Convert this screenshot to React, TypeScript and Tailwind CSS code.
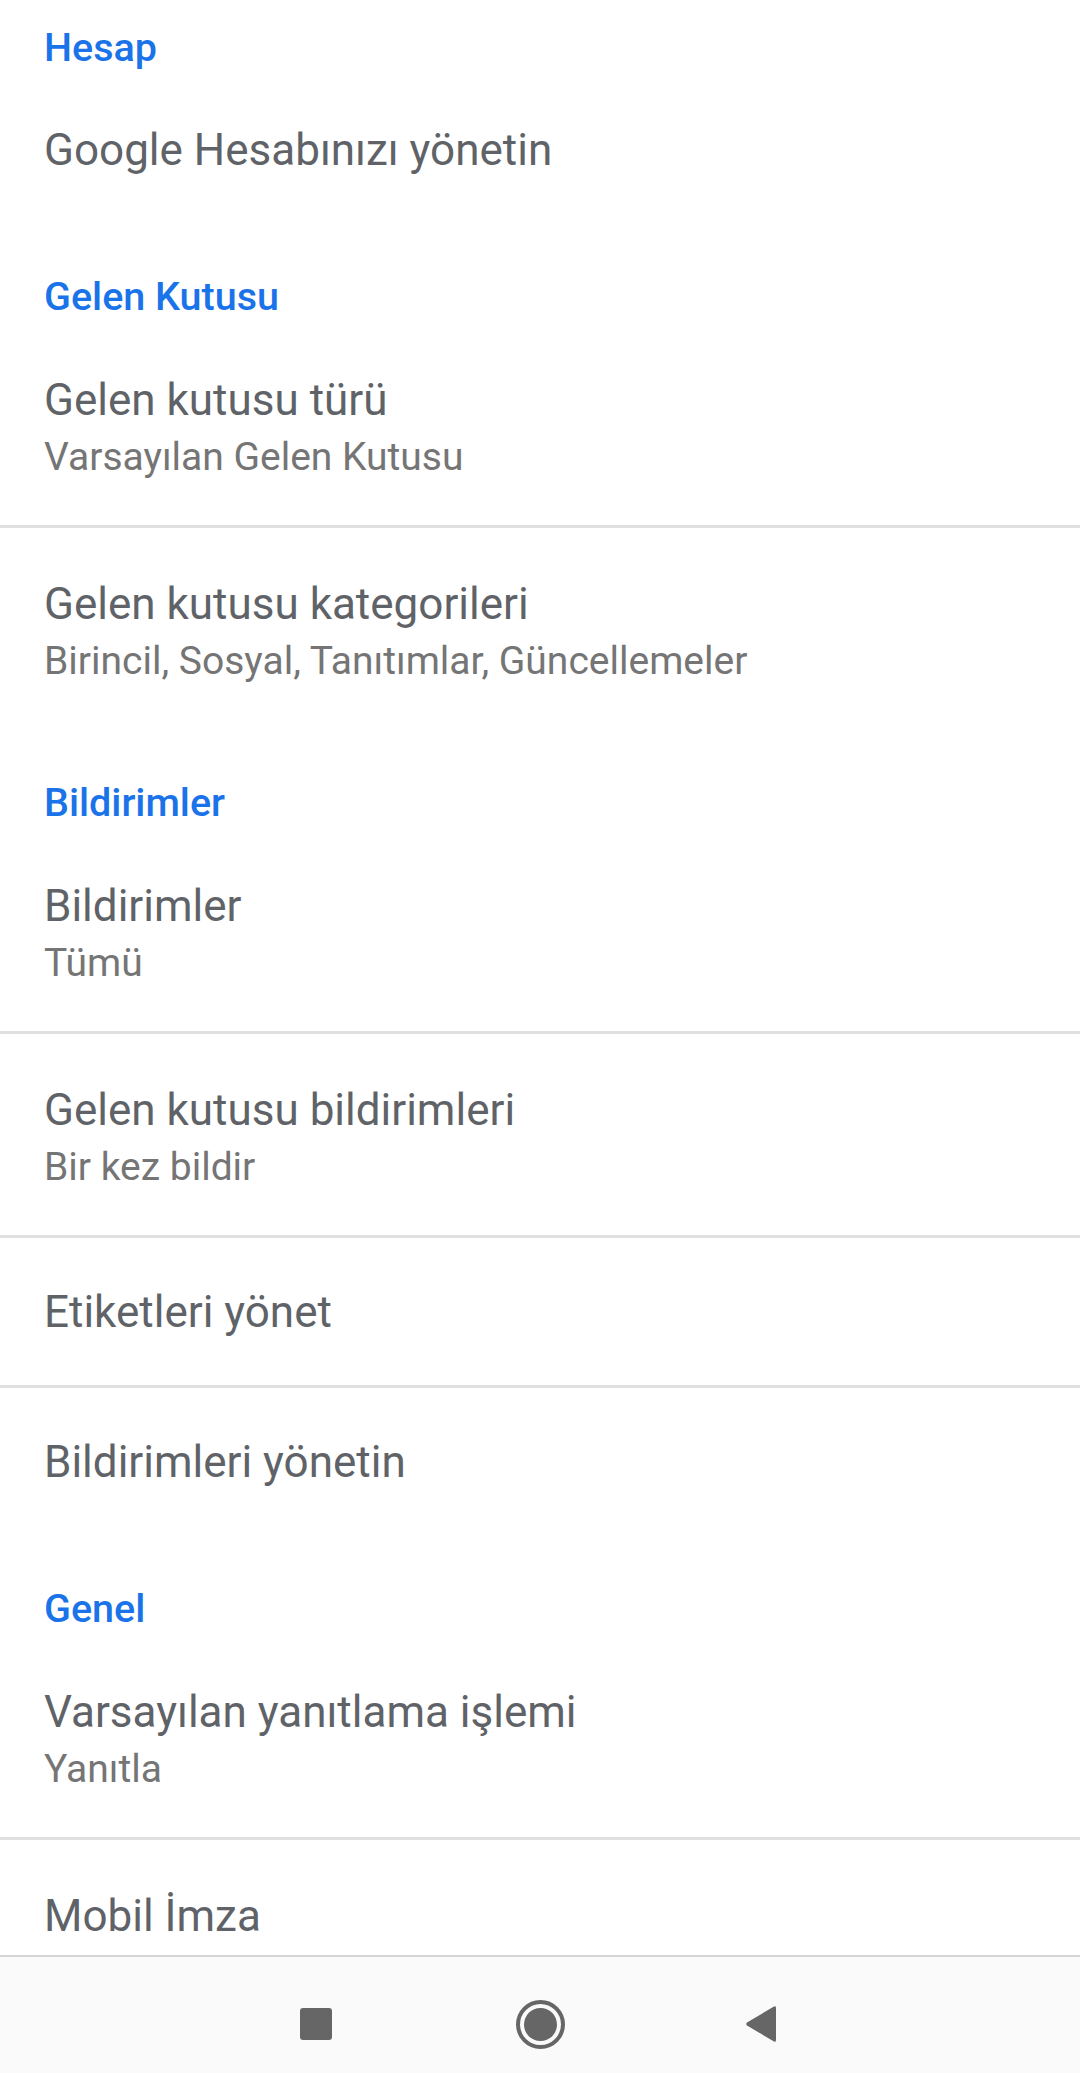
import React from "react";

type Item =
  | { kind: "header"; label: string; first?: boolean }
  | { kind: "row"; title: string; subtitle?: string; tall?: boolean }
  | { kind: "divider" };

const ITEMS: Item[] = [
  { kind: "header", label: "Hesap", first: true },
  { kind: "row", title: "Google Hesabınızı yönetin" },
  { kind: "header", label: "Gelen Kutusu" },
  { kind: "row", title: "Gelen kutusu türü", subtitle: "Varsayılan Gelen Kutusu" },
  { kind: "divider" },
  { kind: "row", title: "Gelen kutusu kategorileri", subtitle: "Birincil, Sosyal, Tanıtımlar, Güncellemeler" },
  { kind: "header", label: "Bildirimler" },
  { kind: "row", title: "Bildirimler", subtitle: "Tümü" },
  { kind: "divider" },
  { kind: "row", title: "Gelen kutusu bildirimleri", subtitle: "Bir kez bildir" },
  { kind: "divider" },
  { kind: "row", title: "Etiketleri yönet" },
  { kind: "divider" },
  { kind: "row", title: "Bildirimleri yönetin" },
  { kind: "header", label: "Genel" },
  { kind: "row", title: "Varsayılan yanıtlama işlemi", subtitle: "Yanıtla" },
  { kind: "divider" },
  // subtitle sits under the nav bar, so only the title is drawn
  { kind: "row", title: "Mobil İmza", tall: true },
];

function Header({ label, first }: { label: string; first?: boolean }) {
  return (
    <div className={first ? "h-[76px] pt-[25px] px-[44px]" : "h-[101px] pt-[51px] px-[44px]"}>
      <p className="text-[39.5px] leading-[46px] font-medium text-[#1a73e8]">{label}</p>
    </div>
  );
}

function Row({ title, subtitle, tall }: { title: string; subtitle?: string; tall?: boolean }) {
  if (!subtitle && !tall) {
    return (
      <div className="h-[147px] px-[44px] flex items-center">
        <p className="text-[44px] leading-[60px] text-[#5f6368]">{title}</p>
      </div>
    );
  }
  return (
    <div className="h-[201px] pt-[46px] px-[44px]">
      <p className="text-[44px] leading-[60px] text-[#5f6368]">{title}</p>
      {subtitle && <p className="text-[39px] leading-[54px] text-[#757575]">{subtitle}</p>}
    </div>
  );
}

function NavBar() {
  return (
    <div className="h-[118px] shrink-0 border-t-2 border-[#d6d6d6] bg-[#fafafa] flex justify-center items-start pt-[43px] gap-[176px]">
      {/* recents */}
      <div className="w-[48px] h-[48px] flex items-center justify-center">
        <div className="w-[32px] h-[32px] rounded-[3px] bg-[#666666]" />
      </div>
      {/* home */}
      <div className="w-[48px] h-[48px] flex items-center justify-center">
        <div className="w-[49px] h-[49px] shrink-0 rounded-full border-[4px] border-[#666666] flex items-center justify-center">
          <div className="w-[33px] h-[33px] rounded-full bg-[#666666]" />
        </div>
      </div>
      {/* back */}
      <div className="w-[48px] h-[48px] flex items-center justify-center">
        <svg width="32" height="38" viewBox="0 0 32 38" className="-translate-x-[3px]">
          <path d="M29 1.5 Q31 0.5 31 3 L31 35 Q31 37.5 29 36.5 L2 20.5 Q0.5 19 2 17.5 Z" fill="#666666" />
        </svg>
      </div>
    </div>
  );
}

export default function App() {
  return (
    <div
      className="w-[1080px] h-[2073px] bg-white flex flex-col overflow-hidden"
      style={{ fontFamily: "Roboto, 'Noto Sans', sans-serif" }}
    >
      <div className="flex-1 overflow-hidden">
        {ITEMS.map((item, i) => {
          if (item.kind === "header") return <Header key={i} label={item.label} first={item.first} />;
          if (item.kind === "divider") return <div key={i} className="h-[3px] bg-[#e0e0e0]" />;
          return <Row key={i} title={item.title} subtitle={item.subtitle} tall={item.tall} />;
        })}
      </div>
      <NavBar />
    </div>
  );
}
